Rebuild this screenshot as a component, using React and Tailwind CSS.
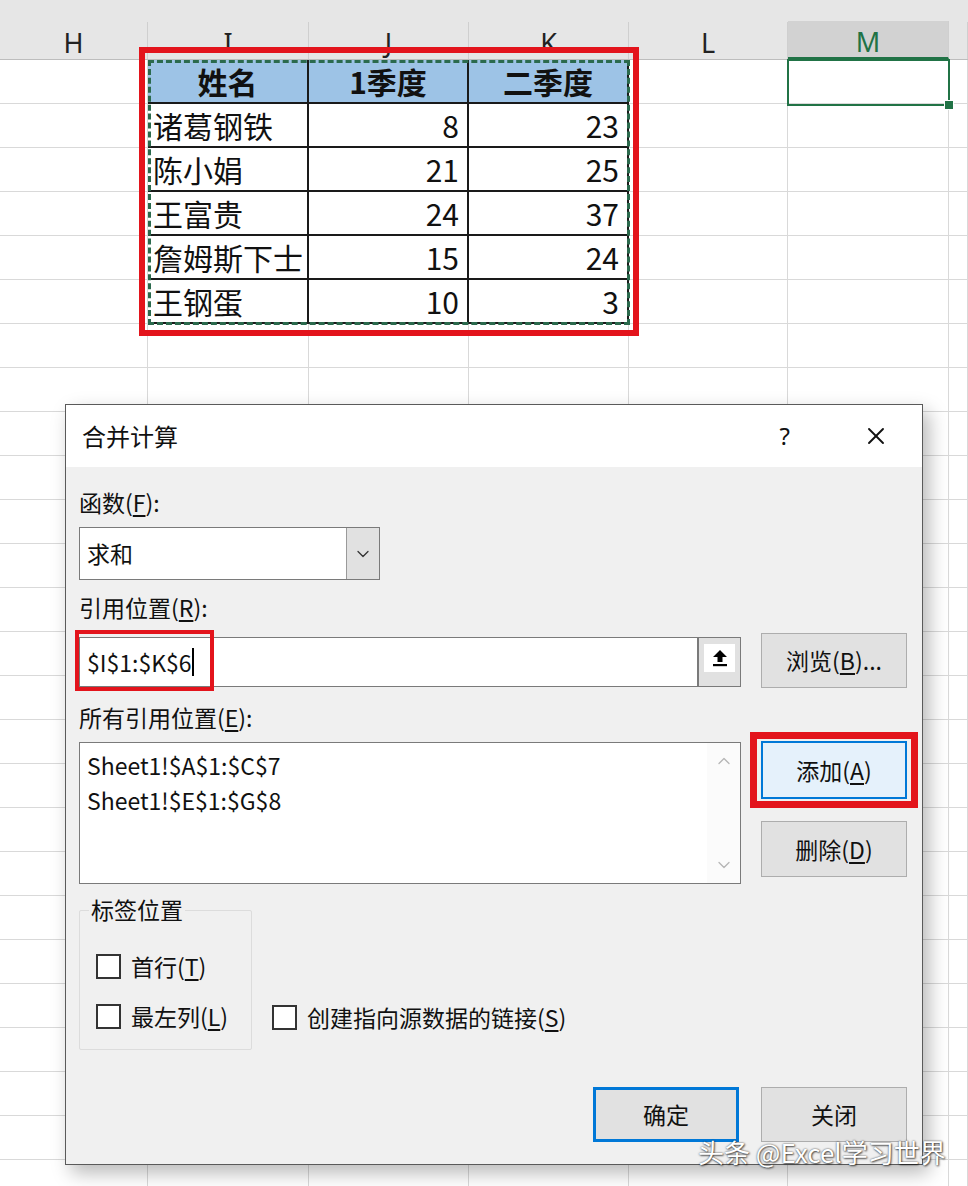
import React from "react";
import { X, ChevronDown, ChevronUp } from "lucide-react";

const cols = [
  { key: "H", w: "w-[148px]" },
  { key: "I", w: "w-[161px]" },
  { key: "J", w: "w-[160px]" },
  { key: "K", w: "w-[160px]" },
  { key: "L", w: "w-[159px]" },
  { key: "M", w: "w-[161px]" },
  { key: "N", w: "w-[19px]" },
];

const data = [
  ["姓名", "1季度", "二季度"],
  ["诸葛钢铁", "8", "23"],
  ["陈小娟", "21", "25"],
  ["王富贵", "24", "37"],
  ["詹姆斯下士", "15", "24"],
  ["王钢蛋", "10", "3"],
];

const Key = ({ k }) => <span className="underline underline-offset-[3px]">{k}</span>;

const UploadIcon = () => (
  <svg width="20" height="20" viewBox="0 0 20 20">
    <path d="M10 2 L3 9 H7.5 V14 H12.5 V9 H17 Z" fill="#000" />
    <rect x="3" y="16" width="14" height="2.2" fill="#000" />
  </svg>
);

const Checkbox = ({ children }) => (
  <div className="flex items-center gap-[10px] h-[25px]">
    <div className="w-[25px] h-[25px] border-2 border-[#333] bg-white" />
    <span className="leading-[25px]">{children}</span>
  </div>
);

const Spreadsheet = () => {
  const rows = Array.from({ length: 26 }, (_, i) => i);
  return (
    <div className="font-['Noto_Sans_CJK_SC',sans-serif]">
      {/* column headers */}
      <div className="flex h-[60px] bg-[#e6e6e6] border-b border-[#bdbdbd]">
        {cols.map((c) => (
          <div key={c.key} className={`${c.w} flex flex-col`}>
            <div className="h-[22px]" />
            <div
              className={`flex-1 flex items-start justify-center pt-[6px] text-[27px] leading-[30px] font-['Noto_Sans',sans-serif] border-r border-[#cfcfcf] ${
                c.key === "M" ? "bg-[#d2d2d2] text-[#217346] border-b-2 border-b-[#217346]" : "text-[#222]"
              }`}
            >
              {c.key === "N" ? "" : c.key}
            </div>
          </div>
        ))}
      </div>
      {/* rows */}
      {rows.map((r) => (
        <div key={r} className="flex h-[44px]">
          {cols.map((c, ci) => {
            const inTable = r < 6 && ci >= 1 && ci <= 3;
            if (!inTable) {
              return <div key={c.key} className={`${c.w} border-r border-b border-[#d9d9d9] bg-white`} />;
            }
            const v = data[r][ci - 1];
            const isHead = r === 0;
            const isNum = !isHead && ci > 1;
            return (
              <div
                key={c.key}
                className={`${c.w} border-r-2 border-b-2 border-[#1a1a1a] flex items-center text-[30px] text-[#111] leading-none ${
                  isHead ? "bg-[#9dc3e6] font-bold justify-center" : "bg-white"
                } ${isNum ? "justify-end pr-[8px]" : ""} ${!isHead && !isNum ? "pl-[5px]" : ""}`}
              >
                {v}
              </div>
            );
          })}
        </div>
      ))}
    </div>
  );
};

const App = () => {
  return (
    <div className="relative w-[968px] h-[1186px] overflow-hidden bg-white font-['Noto_Sans_CJK_SC',sans-serif]">
      <Spreadsheet />

      {/* copy marquee around I1:K6 */}
      <div className="absolute left-[148px] top-[60px] w-[482px] h-[265px] border-[3px] border-dashed border-[#2b6a4d]" />
      {/* red annotation around table */}
      <div className="absolute left-[139px] top-[47px] w-[500px] h-[289px] border-[6px] border-[#e3141c]" />

      {/* selected cell M1 */}
      <div className="absolute left-[787px] top-[59px] w-[163px] h-[47px] border-2 border-[#217346]">
        <div className="absolute -right-[6px] -bottom-[6px] w-[10px] h-[10px] bg-[#217346] border border-white" />
      </div>

      {/* dialog */}
      <div className="absolute left-[65px] top-[404px] w-[858px] h-[761px] border border-[#5a5a5a] bg-[#f0f0f0] shadow-[6px_8px_18px_rgba(0,0,0,0.28)] flex flex-col text-[23px] text-[#111]">
        <div className="h-[62px] bg-white flex items-center pl-[16px] pr-[32px] shrink-0">
          <span className="text-[24px]">合并计算</span>
          <span className="ml-auto mr-[72px] text-[24px] font-['Noto_Sans',sans-serif]">?</span>
          <X size={28} strokeWidth={1.6} color="#111" />
        </div>

        <div className="flex-1 flex flex-col pl-[13px] pr-[15px]">
          <div className="mt-[21px] h-[28px] leading-[28px]">
            函数(<Key k="F" />):
          </div>
          <div className="mt-[11px] w-[301px] h-[53px] flex border border-[#7a7a7a] bg-white">
            <div className="flex-1 flex items-center pl-[7px]">求和</div>
            <div className="w-[33px] bg-[#e1e1e1] border-l border-[#9a9a9a] flex items-center justify-center">
              <ChevronDown size={20} strokeWidth={1.5} color="#333" />
            </div>
          </div>

          <div className="mt-[13px] h-[28px] leading-[28px]">
            引用位置(<Key k="R" />):
          </div>
          <div className="mt-[12px] h-[55px] flex items-start">
            <div className="relative mt-[4px] w-[619px] h-[50px] flex items-center border border-[#7a7a7a] bg-white pl-[7px]">
              <span>$I$1:$K$6</span>
              <span className="w-[2px] h-[28px] bg-black" />
              <div className="absolute -left-[5px] -top-[8px] w-[139px] h-[61px] border-[4px] border-[#e3141c]" />
            </div>
            <div className="mt-[4px] w-[43px] h-[50px] border border-[#7a7a7a] bg-[#e1e1e1] flex items-start justify-center pt-[6px]">
              <div className="w-[31px] h-[28px] bg-white flex items-center justify-center">
                <UploadIcon />
              </div>
            </div>
            <div className="ml-auto w-[146px] h-[55px] border border-[#adadad] bg-[#e1e1e1] flex items-center justify-center">
              浏览(<Key k="B" />)...
            </div>
          </div>

          <div className="mt-[15px] h-[28px] leading-[28px]">
            所有引用位置(<Key k="E" />):
          </div>
          <div className="mt-[10px] flex items-start">
            <div className="mt-[1px] w-[662px] h-[142px] border border-[#7a7a7a] bg-white flex">
              <div className="flex-1 pl-[7px] pt-[5px] leading-[35px]">
                <div>Sheet1!$A$1:$C$7</div>
                <div>Sheet1!$E$1:$G$8</div>
              </div>
              <div className="w-[33px] flex flex-col items-center justify-between py-[8px] bg-[#fbfbfb]">
                <ChevronUp size={20} strokeWidth={1.5} color="#b5b5b5" />
                <ChevronDown size={20} strokeWidth={1.5} color="#b5b5b5" />
              </div>
            </div>
            <div className="ml-auto flex flex-col gap-[22px]">
              <div className="relative w-[146px] h-[58px] border-2 border-[#0078d7] bg-[#e5f1fb] flex items-center justify-center">
                添加(<Key k="A" />)
                <div className="absolute -left-[13px] -top-[11px] w-[168px] h-[76px] border-[7px] border-[#e3141c]" />
              </div>
              <div className="w-[146px] h-[56px] border border-[#adadad] bg-[#e1e1e1] flex items-center justify-center">
                删除(<Key k="D" />)
              </div>
            </div>
          </div>

          <div className="mt-[26px] flex items-end">
            <div className="relative w-[173px] h-[140px] border border-[#dcdcdc] rounded-[2px] pl-[16px] pt-[43px] flex flex-col gap-[25px]">
              <span className="absolute left-[9px] -top-[16px] px-[2px] bg-[#f0f0f0] leading-[28px]">标签位置</span>
              <Checkbox>
                首行(<Key k="T" />)
              </Checkbox>
              <Checkbox>
                最左列(<Key k="L" />)
              </Checkbox>
            </div>
            <div className="ml-[20px] mb-[20px]">
              <Checkbox>
                创建指向源数据的链接(<Key k="S" />)
              </Checkbox>
            </div>
          </div>

          <div className="mt-[37px] flex justify-end gap-[22px]">
            <div className="w-[146px] h-[55px] border-[3px] border-[#0078d7] bg-[#e1e1e1] flex items-center justify-center">
              确定
            </div>
            <div className="w-[146px] h-[55px] border border-[#adadad] bg-[#e1e1e1] flex items-center justify-center">
              关闭
            </div>
          </div>
        </div>
      </div>

      {/* watermark */}
      <div className="absolute left-[698px] top-[1135px] text-[26px] leading-[34px] text-white [text-shadow:0_0_2px_rgba(0,0,0,0.7),1px_1px_2px_rgba(0,0,0,0.6)]">
        头条 @Excel学习世界
      </div>
    </div>
  );
};

export default App;
